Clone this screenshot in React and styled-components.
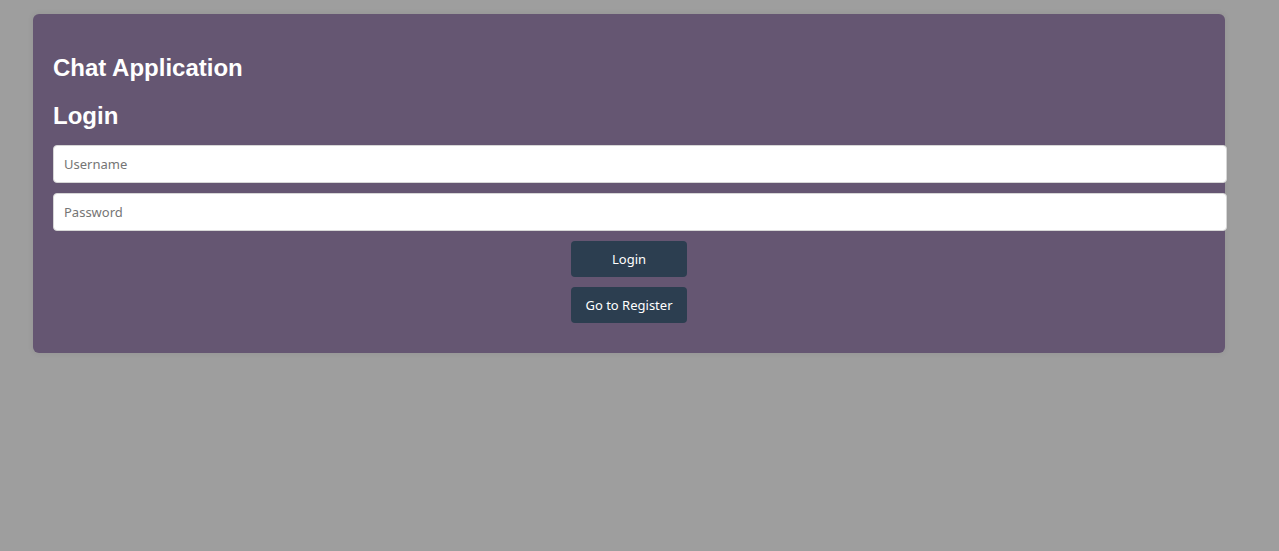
import React from "react";
import styled, { createGlobalStyle } from "styled-components";

const GlobalStyle = createGlobalStyle`
  html, body {
    margin: 0;
    padding: 0;
    background: #9e9e9e;
    min-height: 100%;
  }
  body {
    font-family: "Liberation Sans", Arial, sans-serif;
    min-height: 551px;
  }
`;

const Page = styled.div`
  padding: 14px 0 0 33px;
`;

const Card = styled.div`
  width: 1192px;
  box-sizing: border-box;
  background: #655672;
  border-radius: 6px;
  padding: 20px 20px 30px;
  box-shadow: 0 0 6px rgba(0, 0, 0, 0.08);
`;

const Title = styled.h2`
  margin: 20px 0 15px;
  font-size: 24px;
  line-height: 28px;
  font-weight: bold;
  color: #ffffff;
`;

const Form = styled.div`
  display: flex;
  flex-direction: column;
  align-items: center;
  gap: 10px;
`;

const Input = styled.input`
  align-self: flex-start;
  width: 100%;
  height: 36px;
  padding: 0 10px;
  border: 1px solid #d6d6d6;
  border-radius: 4px;
  background: #ffffff;
  font-family: "Noto Sans", "Open Sans", sans-serif;
  font-size: 13px;
  color: #333;
  outline: none;

  &::placeholder {
    color: #757575;
  }
`;

const Button = styled.button`
  width: 116px;
  height: 36px;
  border: none;
  border-radius: 4px;
  background: #2c3e50;
  color: #ffffff;
  font-family: "Noto Sans", "Open Sans", sans-serif;
  font-size: 13px;
  cursor: pointer;
`;

export default function App() {
  return (
    <>
      <GlobalStyle />
      <Page>
        <Card>
          <Title>Chat Application</Title>
          <Title>Login</Title>
          <Form>
            <Input type="text" placeholder="Username" />
            <Input type="password" placeholder="Password" />
            <Button>Login</Button>
            <Button>Go to Register</Button>
          </Form>
        </Card>
      </Page>
    </>
  );
}
